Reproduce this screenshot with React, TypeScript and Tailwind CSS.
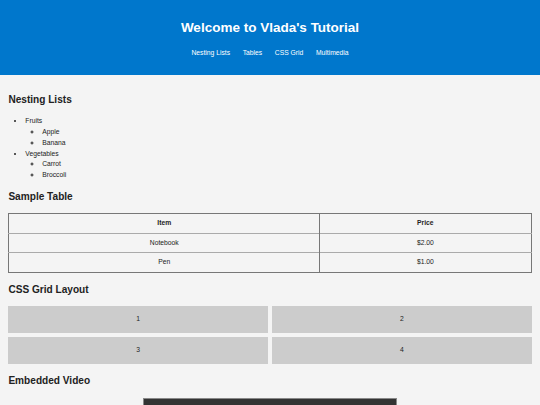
export default function App() {
  const font = { fontFamily: '"Liberation Sans", Arial, sans-serif' };
  return (
    <div
      className="min-h-[405px] bg-[#f4f4f4] text-[6.75px] leading-[10.8px] text-[#222]"
      style={font}
    >
      <header className="bg-[#0077cc] pt-[8.4px] pb-[16px] text-center text-white">
        <h1 className="my-[9px] text-[13.5px] leading-[21.6px] font-bold">
          Welcome to Vlada's Tutorial
        </h1>
        <nav className="flex justify-center gap-[12.6px]">
          <a>Nesting Lists</a>
          <a>Tables</a>
          <a>CSS Grid</a>
          <a>Multimedia</a>
        </nav>
      </header>

      <main className="px-[8.4px] py-[8.4px]">
        <h2 className="my-[8.4px] text-[10.1px] leading-[16.2px] font-bold">Nesting Lists</h2>
        <ul className="my-[6.75px] list-disc pl-[16.9px]">
          <li>
            Fruits
            <ul className="list-[circle] pl-[16.9px]">
              <li>Apple</li>
              <li>Banana</li>
            </ul>
          </li>
          <li>
            Vegetables
            <ul className="list-[circle] pl-[16.9px]">
              <li>Carrot</li>
              <li>Broccoli</li>
            </ul>
          </li>
        </ul>

        <h2 className="mt-[8.4px] mb-[7.6px] text-[10.1px] leading-[16.2px] font-bold">Sample Table</h2>
        <table className="w-full border-collapse border border-[#777] text-center">
          <thead>
            <tr className="border-b border-[#aaa]">
              <th className="w-[59.5%] border-r border-[#777] px-[4.2px] py-[3.9px]">Item</th>
              <th className="px-[4.2px] py-[3.9px]">Price</th>
            </tr>
          </thead>
          <tbody>
            <tr className="border-b border-[#aaa]">
              <td className="border-r border-[#777] px-[4.2px] py-[3.9px]">Notebook</td>
              <td className="px-[4.2px] py-[3.9px]">$2.00</td>
            </tr>
            <tr>
              <td className="border-r border-[#777] px-[4.2px] py-[3.9px]">Pen</td>
              <td className="px-[4.2px] py-[3.9px]">$1.00</td>
            </tr>
          </tbody>
        </table>

        <h2 className="mt-[9.2px] mb-[8px] text-[10.1px] leading-[16.2px] font-bold">CSS Grid Layout</h2>
        <div className="grid grid-cols-2 gap-[4.2px] text-center">
          {[1, 2, 3, 4].map((n) => (
            <div key={n} className="bg-[#cccccc] px-[8.4px] py-[8px]">
              {n}
            </div>
          ))}
        </div>

        <h2 className="mt-[9.2px] mb-[8.4px] text-[10.1px] leading-[16.2px] font-bold">Embedded Video</h2>
        <div className="mx-auto h-[142px] w-[254px] border border-[#888] bg-[#333]" />
      </main>
    </div>
  );
}
